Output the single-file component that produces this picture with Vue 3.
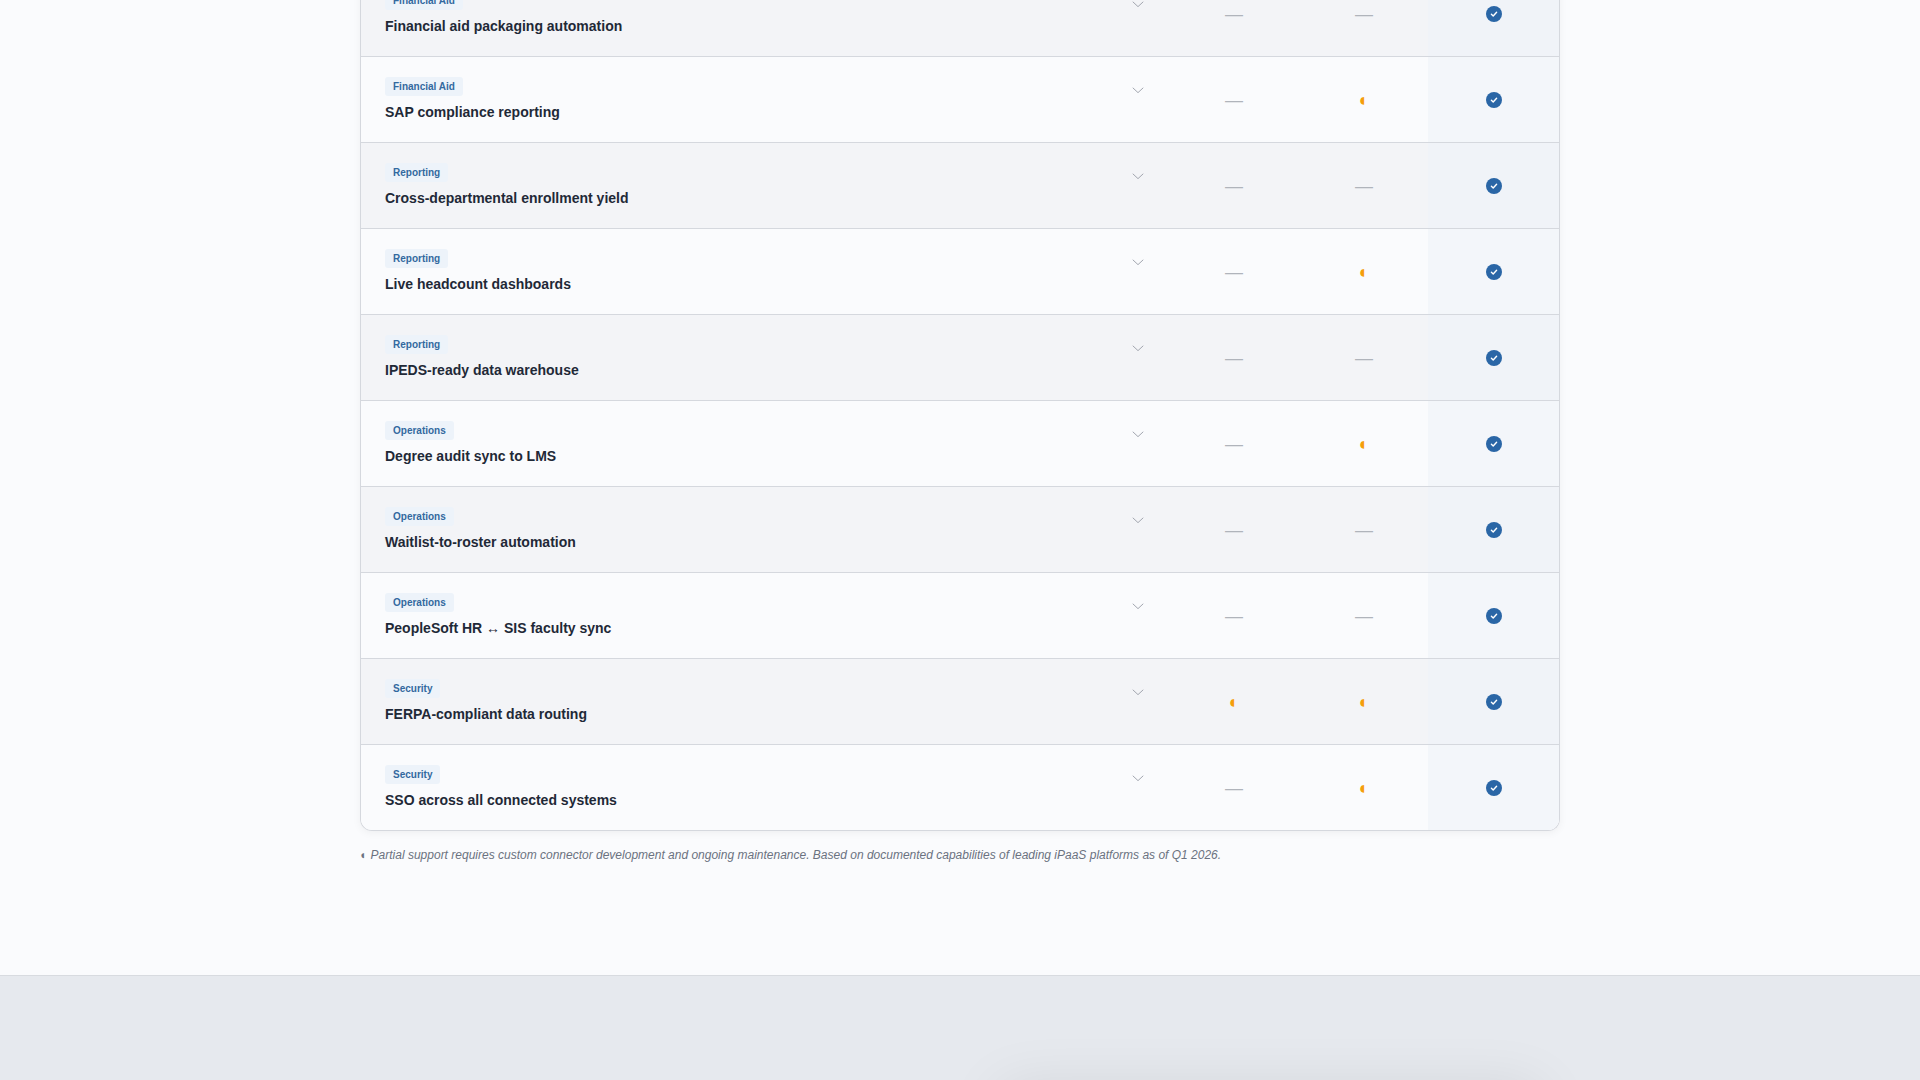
<template>
  <div class="page">
    <main class="content">
      <div class="table-card">
        <div
          v-for="(row, i) in rows"
          :key="row.title"
          class="row"
          :class="{ alt: i % 2 === 0 }"
        >
          <div class="feature-cell">
            <div class="feature-text">
              <span class="tag">{{ row.tag }}</span>
              <div class="feature-title">{{ row.title }}</div>
            </div>
            <svg class="chevron" viewBox="0 0 24 24" fill="none" stroke="currentColor" stroke-width="1.3">
              <polyline points="5 9 12 15.5 19 9" />
            </svg>
          </div>
          <div v-for="(val, j) in [row.a, row.b]" :key="j" class="mark-cell">
            <span v-if="val === 'partial'" class="partial">◖</span>
            <span v-else class="none">—</span>
          </div>
          <div class="mark-cell ours">
            <span class="check">
              <svg viewBox="0 0 16 16" fill="none" stroke="#fff" stroke-width="1.4" stroke-linecap="round" stroke-linejoin="round">
                <polyline points="5.4 8.3 7.2 10 10.6 6.2" />
              </svg>
            </span>
          </div>
        </div>
      </div>
      <p class="footnote"><span class="note-mark">◖</span> Partial support requires custom connector development and ongoing maintenance. Based on documented capabilities of leading iPaaS platforms as of Q1 2026.</p>
    </main>
    <footer class="footer">
      <div class="footer-glow"></div>
    </footer>
  </div>
</template>

<script setup>
const rows = [
  { tag: 'Financial Aid', title: 'Financial aid packaging automation', a: 'none', b: 'none' },
  { tag: 'Financial Aid', title: 'SAP compliance reporting', a: 'none', b: 'partial' },
  { tag: 'Reporting', title: 'Cross-departmental enrollment yield', a: 'none', b: 'none' },
  { tag: 'Reporting', title: 'Live headcount dashboards', a: 'none', b: 'partial' },
  { tag: 'Reporting', title: 'IPEDS-ready data warehouse', a: 'none', b: 'none' },
  { tag: 'Operations', title: 'Degree audit sync to LMS', a: 'none', b: 'partial' },
  { tag: 'Operations', title: 'Waitlist-to-roster automation', a: 'none', b: 'none' },
  { tag: 'Operations', title: 'PeopleSoft HR ↔ SIS faculty sync', a: 'none', b: 'none' },
  { tag: 'Security', title: 'FERPA-compliant data routing', a: 'partial', b: 'partial' },
  { tag: 'Security', title: 'SSO across all connected systems', a: 'none', b: 'partial' }
]
</script>

<style>
html, body {
  margin: 0;
  background: #fafbfd;
}
</style>

<style scoped>
.page {
  height: 1080px;
  overflow: hidden;
  background: #fafbfd;
  font-family: "Liberation Sans", Arial, sans-serif;
  color: #1f2937;
}

.content {
  width: 1200px;
  height: 1004px;
  margin: -29px auto 0;
}

.table-card {
  border: 1px solid #d5d8de;
  border-top: none;
  border-radius: 0 0 12px 12px;
  overflow: hidden;
  box-shadow: 0 2px 8px rgba(0, 0, 0, 0.05);
}

.row {
  display: grid;
  grid-template-columns: 1fr 130px 130px 131px;
  border-bottom: 1px solid #d5d8de;
  background: #fafbfd;
}

.row:last-child {
  border-bottom: none;
}

.row.alt {
  background: #f3f4f7;
}

.feature-cell {
  display: flex;
  justify-content: space-between;
  align-items: flex-start;
  padding: 20px 21px 19px 24px;
}

.tag {
  display: block;
  width: fit-content;
  height: 19px;
  line-height: 19px;
  padding: 0 8px;
  margin-bottom: 6px;
  border-radius: 3px;
  background: #edf3fa;
  color: #33699f;
  font-size: 10px;
  font-weight: 700;
}

.feature-title {
  font-size: 14px;
  line-height: 21px;
  font-weight: 700;
  color: #1f2937;
}

.chevron {
  width: 18px;
  height: 18px;
  margin-top: 4px;
  color: #9fa4ad;
}

.mark-cell {
  display: flex;
  align-items: center;
  justify-content: center;
}

.mark-cell.ours {
  background: #f3f6fa;
}

.row.alt .mark-cell.ours {
  background: #f0f3f8;
}

.none {
  margin-left: 2px;
  padding-top: 2px;
  font-size: 18px;
  color: #b0b4bb;
}

.partial {
  margin-right: 2px;
  padding-top: 1px;
  font-size: 18px;
  color: #f59e0b;
}

.check {
  display: block;
  width: 16px;
  height: 16px;
  border-radius: 50%;
  background: #2a66a6;
}

.check svg {
  display: block;
  width: 16px;
  height: 16px;
}

.footnote {
  margin: 15px 0 0;
  font-size: 12px;
  line-height: 18px;
  font-style: italic;
  color: #6b7280;
}

.note-mark {
  margin-left: -1px;
  margin-right: 1px;
}

.footer {
  position: relative;
  height: 105px;
  background: #e6e9ee;
  border-top: 1px solid #d8dbe0;
  overflow: hidden;
}

.footer-glow {
  position: absolute;
  left: 1000px;
  top: 122px;
  width: 540px;
  height: 60px;
  box-shadow: 0 -10px 60px rgba(0, 0, 0, 0.09);
}
</style>
